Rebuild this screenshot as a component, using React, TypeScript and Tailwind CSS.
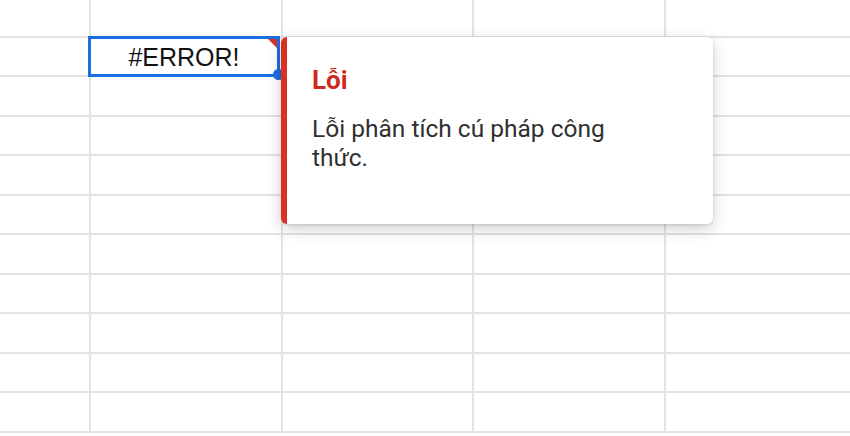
import React from "react";

const rowHeights = [
  "h-[38px]",
  "h-[39px]",
  "h-[40px]",
  "h-[39px]",
  "h-[40px]",
  "h-[39px]",
  "h-[40px]",
  "h-[39px]",
  "h-[40px]",
  "h-[39px]",
  "h-[40px]",
];

const colWidths = ["w-[91px]", "w-[192px]", "w-[191px]", "w-[192px]"];

export default function App() {
  return (
    <div className="relative w-[850px] h-[436px] overflow-hidden bg-white">
      {/* grid */}
      <div className="flex flex-col">
        {rowHeights.map((h, i) => (
          <div key={i} className={`flex shrink-0 border-b-2 border-[#e3e3e3] ${h}`}>
            {colWidths.map((w, j) => (
              <div key={j} className={`shrink-0 border-r-2 border-[#e3e3e3] ${w}`} />
            ))}
            <div className="flex-1" />
          </div>
        ))}
      </div>

      {/* selected cell */}
      <div className="absolute left-[88px] top-[36px] w-[192px] h-[41px] border-[3px] border-[#1a6fe0] bg-white flex items-center justify-center">
        <span
          className="text-[25px] leading-none text-[#111] pt-[1px]"
          style={{ fontFamily: '"Liberation Sans", Arial, sans-serif' }}
        >
          #ERROR!
        </span>
        <svg className="absolute right-0 top-0" width="9" height="9" viewBox="0 0 9 9">
          <polygon points="0,0 9,0 9,9" fill="#d93025" />
        </svg>
      </div>
      <div className="absolute left-[273px] top-[69px] w-[11px] h-[11px] rounded-full bg-[#1a6fe0]" />

      {/* error tooltip */}
      <div className="absolute left-[281px] top-[37px] w-[432px] h-[187px] rounded-[6px] bg-white overflow-hidden flex shadow-[0_5px_16px_rgba(0,0,0,0.18),0_1px_3px_rgba(0,0,0,0.12)]">
        <div className="w-[6px] shrink-0 bg-[#d93025]" />
        <div
          className="flex flex-col pl-[25px] pt-[28px]"
          style={{ fontFamily: "Roboto, 'Noto Sans', sans-serif" }}
        >
          <div className="text-[26px] leading-[30px] font-bold text-[#d02a1f]">Lỗi</div>
          <div className="mt-[19px] w-[330px] text-[24.5px] leading-[29px] text-[#303030]">
            Lỗi phân tích cú pháp công thức.
          </div>
        </div>
      </div>
    </div>
  );
}
